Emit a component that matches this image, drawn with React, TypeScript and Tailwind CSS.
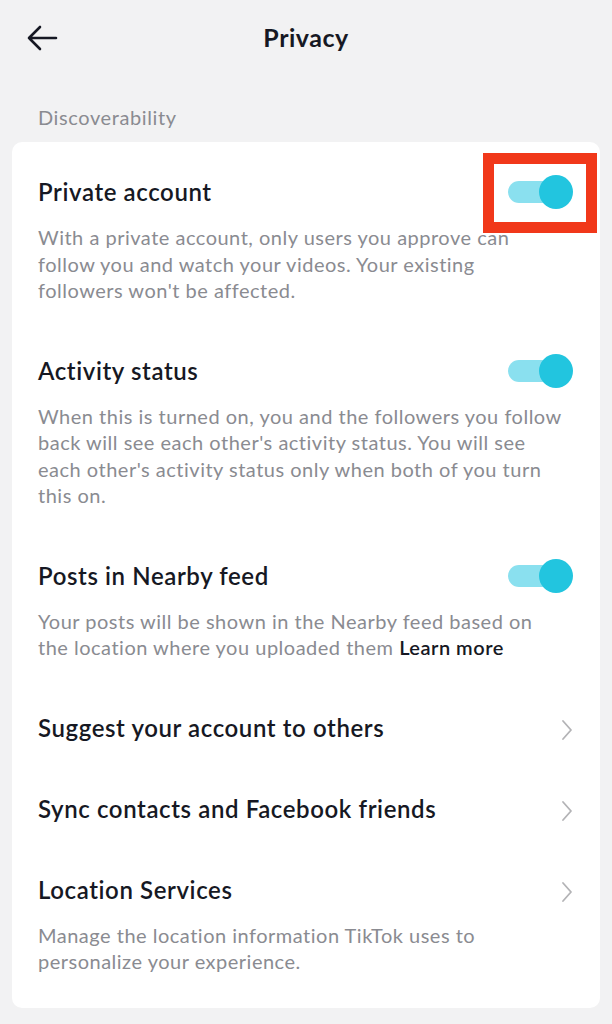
import React from "react";

const font = { fontFamily: "Lato, 'Open Sans', sans-serif" };

function Toggle() {
  return (
    <div className="relative w-[65px] h-[34px] shrink-0">
      <div className="absolute left-0 top-[6px] w-[58px] h-[22px] rounded-full bg-[#8ae0ef]" />
      <div className="absolute right-0 top-0 w-[34px] h-[34px] rounded-full bg-[#22c5df]" />
    </div>
  );
}

function Chevron() {
  return (
    <svg width="12" height="22" viewBox="0 0 12 22" className="shrink-0 mt-[4px]">
      <path d="M2 2 L10 11 L2 20" fill="none" stroke="#b3b3b6" strokeWidth="1.8" strokeLinecap="round" strokeLinejoin="round" />
    </svg>
  );
}

function Row({
  title,
  desc,
  right,
  highlight,
}: {
  title: string;
  desc?: React.ReactNode;
  right: React.ReactNode;
  highlight?: boolean;
}) {
  return (
    <div className="flex flex-col">
      <div className="flex items-center justify-between h-[28px]">
        <div className="text-[24px] font-semibold text-[#161823] leading-[28px] tracking-[0.6px]">{title}</div>
        <div className="relative flex items-center">
          {highlight && (
            <div className="absolute left-[-25px] top-[-22px] w-[114px] h-[80px] border-[11px] border-[#f1381a]" />
          )}
          {right}
        </div>
      </div>
      {desc && (
        <div className="mt-[18px] pr-[9px] text-[20px] leading-[26.5px] text-[#8a8b91] tracking-[0.5px]">{desc}</div>
      )}
    </div>
  );
}

export default function App() {
  return (
    <div className="min-h-[1024px] w-[612px] bg-[#f2f2f3]" style={font}>
      <div className="relative h-[76px] flex items-center justify-center">
        <svg width="32" height="26" viewBox="0 0 32 26" className="absolute left-[26px] top-[25px]">
          <path d="M30 13 H3 M14 2 L3 13 L14 24" fill="none" stroke="#161823" strokeWidth="2.6" strokeLinecap="round" strokeLinejoin="round" />
        </svg>
        <div className="text-[25px] font-bold text-[#161823] tracking-[0.5px]">Privacy</div>
      </div>
      <div className="pl-[38px] h-[66px] flex items-center text-[20px] text-[#8a8b91] pt-[16px] pb-[0px] tracking-[0.6px]">Discoverability</div>
      <div className="mx-[12px] bg-white rounded-[10px] pl-[26px] pr-[27px] pt-[36px] pb-[33px] flex flex-col gap-[53px]">
        <Row
          title="Private account"
          highlight
          right={<Toggle />}
          desc="With a private account, only users you approve can follow you and watch your videos. Your existing followers won't be affected."
        />
        <Row
          title="Activity status"
          right={<Toggle />}
          desc="When this is turned on, you and the followers you follow back will see each other's activity status. You will see each other's activity status only when both of you turn this on."
        />
        <Row
          title="Posts in Nearby feed"
          right={<Toggle />}
          desc={
            <>
              Your posts will be shown in the Nearby feed based on the location where you uploaded them{" "}
              <span className="text-[#161823] font-semibold">Learn more</span>
            </>
          }
        />
        <Row title="Suggest your account to others" right={<Chevron />} />
        <Row title="Sync contacts and Facebook friends" right={<Chevron />} />
        <Row
          title="Location Services"
          right={<Chevron />}
          desc="Manage the location information TikTok uses to personalize your experience."
        />
      </div>
    </div>
  );
}
